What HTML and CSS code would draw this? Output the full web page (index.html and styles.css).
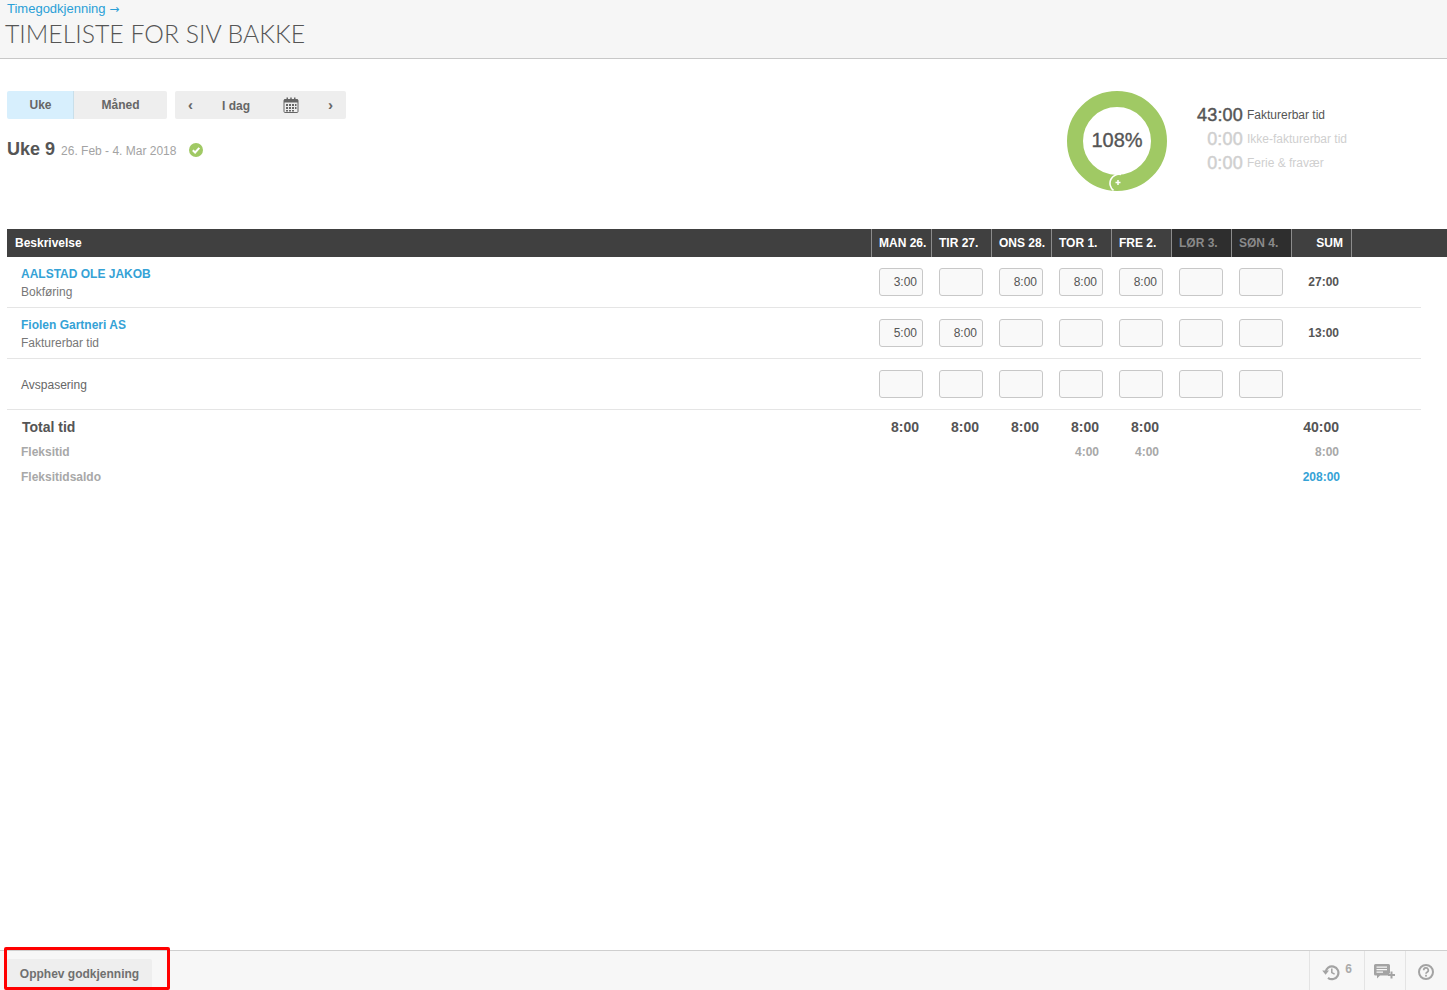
FILE: index.html
```html
<!DOCTYPE html>
<html lang="no">
<head>
<meta charset="utf-8">
<title>Timeliste</title>
<link rel="stylesheet" href="styles.css">
</head>
<body>
<div class="page">
  <header class="top">
    <a class="crumb">Timegodkjenning <span class="crumb-arrow">→</span></a>
    <h1 class="title">TIMELISTE FOR SIV BAKKE</h1>
  </header>
  <section class="summary">
    <div class="controls">
      <div class="toolbar">
        <div class="seg">
          <span class="seg-btn seg-on">Uke</span>
          <span class="seg-btn seg-off">Måned</span>
        </div>
        <div class="nav">
          <span class="nav-arrow">‹</span>
          <span class="nav-today">I dag</span>
          <svg class="cal" width="16" height="16" viewBox="0 0 16 16">
            <rect x="1" y="2.5" width="14" height="13" rx="1" fill="none" stroke="#666"/>
            <rect x="1" y="2.5" width="14" height="3" fill="#666"/>
            <rect x="3.5" y="0.5" width="1.5" height="3" fill="#666"/>
            <rect x="7.25" y="0.5" width="1.5" height="3" fill="#666"/>
            <rect x="11" y="0.5" width="1.5" height="3" fill="#666"/>
            <g fill="#666">
              <rect x="3" y="7" width="2" height="2"/><rect x="6" y="7" width="2" height="2"/><rect x="9" y="7" width="2" height="2"/><rect x="12" y="7" width="1.5" height="2"/>
              <rect x="3" y="10" width="2" height="2"/><rect x="6" y="10" width="2" height="2"/><rect x="9" y="10" width="2" height="2"/><rect x="12" y="10" width="1.5" height="2"/>
              <rect x="3" y="13" width="2" height="1.5"/><rect x="6" y="13" width="2" height="1.5"/><rect x="9" y="13" width="2" height="1.5"/>
            </g>
          </svg>
          <span class="nav-arrow nav-next">›</span>
        </div>
      </div>
      <div class="week">
        <span class="week-name">Uke 9</span>
        <span class="week-range">26. Feb - 4. Mar 2018</span>
        <svg class="week-ok" width="14" height="14" viewBox="0 0 14 14">
          <circle cx="7" cy="7" r="7" fill="#a0c964"/>
          <path d="M3.8 7.2 6.1 9.5 10.3 4.9" fill="none" stroke="#fff" stroke-width="2"/>
        </svg>
      </div>
    </div>
    <div class="donut">
      <svg width="100" height="100" viewBox="0 0 100 100">
        <circle cx="50" cy="50" r="42" fill="none" stroke="#a0c964" stroke-width="16"/>
        <path d="M54 83.500A9 9 0 0 0 46.500 99.400" fill="none" stroke="#fff" stroke-width="1.600"/>
        <path d="M48.500 91.500h5M51 89v5" stroke="#fff" stroke-width="1.500"/>
      </svg>
      <span class="donut-label">108%</span>
    </div>
    <dl class="totals">
      <div class="total-row"><dt class="total-val">43:00</dt><dd class="total-name">Fakturerbar tid</dd></div>
      <div class="total-row total-dim"><dt class="total-val">0:00</dt><dd class="total-name">Ikke-fakturerbar tid</dd></div>
      <div class="total-row total-dim"><dt class="total-val">0:00</dt><dd class="total-name">Ferie &amp; fravær</dd></div>
    </dl>
  </section>

  <section class="sheet">
    <div class="thead">
      <div class="th th-desc">Beskrivelse</div>
      <div class="th">MAN 26.</div>
      <div class="th">TIR 27.</div>
      <div class="th">ONS 28.</div>
      <div class="th">TOR 1.</div>
      <div class="th">FRE 2.</div>
      <div class="th th-off">LØR 3.</div>
      <div class="th th-off">SØN 4.</div>
      <div class="th th-sum">SUM</div>
      <div class="th"></div>
    </div>

    <div class="row">
      <div class="desc"><div class="client">AALSTAD OLE JAKOB</div><div class="task">Bokføring</div></div>
      <div class="cell"><span class="box">3:00</span></div>
      <div class="cell"><span class="box"></span></div>
      <div class="cell"><span class="box">8:00</span></div>
      <div class="cell"><span class="box">8:00</span></div>
      <div class="cell"><span class="box">8:00</span></div>
      <div class="cell"><span class="box"></span></div>
      <div class="cell"><span class="box"></span></div>
      <div class="rowsum">27:00</div>
    </div>
    <div class="row">
      <div class="desc"><div class="client">Fiolen Gartneri AS</div><div class="task">Fakturerbar tid</div></div>
      <div class="cell"><span class="box">5:00</span></div>
      <div class="cell"><span class="box">8:00</span></div>
      <div class="cell"><span class="box"></span></div>
      <div class="cell"><span class="box"></span></div>
      <div class="cell"><span class="box"></span></div>
      <div class="cell"><span class="box"></span></div>
      <div class="cell"><span class="box"></span></div>
      <div class="rowsum">13:00</div>
    </div>
    <div class="row">
      <div class="desc"><div class="task-only">Avspasering</div></div>
      <div class="cell"><span class="box"></span></div>
      <div class="cell"><span class="box"></span></div>
      <div class="cell"><span class="box"></span></div>
      <div class="cell"><span class="box"></span></div>
      <div class="cell"><span class="box"></span></div>
      <div class="cell"><span class="box"></span></div>
      <div class="cell"><span class="box"></span></div>
      <div class="rowsum"></div>
    </div>

    <div class="foot foot-total">
      <div class="foot-name">Total tid</div>
      <div class="num">8:00</div><div class="num">8:00</div><div class="num">8:00</div><div class="num">8:00</div><div class="num">8:00</div><div class="num"></div><div class="num"></div>
      <div class="num">40:00</div>
    </div>
    <div class="foot foot-flex">
      <div class="foot-name">Fleksitid</div>
      <div class="num"></div><div class="num"></div><div class="num"></div><div class="num">4:00</div><div class="num">4:00</div><div class="num"></div><div class="num"></div>
      <div class="num">8:00</div>
    </div>
    <div class="foot foot-flex">
      <div class="foot-name">Fleksitidsaldo</div>
      <div class="num"></div><div class="num"></div><div class="num"></div><div class="num"></div><div class="num"></div><div class="num"></div><div class="num"></div>
      <div class="num num-blue">208:00</div>
    </div>
  </section>

  <footer class="bottom">
    <span class="undo">Opphev godkjenning</span>
    <div class="tools">
      <div class="tool tool-history">
        <svg width="18" height="18" viewBox="0 0 18 18">
          <path d="M3.600 9.500A6.400 6.400 0 1 1 6 14.800" fill="none" stroke="#a3a3a3" stroke-width="2.200"/>
          <path d="M0.200 7.500H7L3.600 11.800Z" fill="#a3a3a3"/>
          <path d="M9.800 5.500V9.600L12.600 11.200" fill="none" stroke="#a3a3a3" stroke-width="1.500"/>
        </svg>
        <span class="tool-count">6</span>
      </div>
      <div class="tool tool-comment">
        <svg width="22" height="16" viewBox="0 0 22 16">
          <path d="M1.500 0H14.500A1.500 1.500 0 0 1 16 1.500V10A1.500 1.500 0 0 1 14.500 11.500H6L3 14.500V11.500H1.500A1.500 1.500 0 0 1 0 10V1.500A1.500 1.500 0 0 1 1.500 0Z" fill="#a3a3a3"/>
          <path d="M2.500 3.200H13M2.500 5.700H13M2.500 8.200H9" stroke="#f7f7f7" stroke-width="1.200"/>
          <path d="M15 9.500H21.500V12.500H15Z" fill="#f7f7f7"/>
          <path d="M17.500 7.500V14.500M14 11H21" stroke="#a3a3a3" stroke-width="2"/>
        </svg>
      </div>
      <div class="tool tool-help">
        <svg width="16" height="16" viewBox="0 0 16 16">
          <circle cx="8" cy="8" r="7" fill="none" stroke="#a3a3a3" stroke-width="2"/>
          <path d="M5.700 6.200A2.300 2.300 0 1 1 9 8.200C8.300 8.600 8 9 8 9.800" fill="none" stroke="#a3a3a3" stroke-width="1.700"/>
          <rect x="7.100" y="10.800" width="1.800" height="1.800" fill="#a3a3a3"/>
        </svg>
      </div>
    </div>
  </footer>
  <div class="mark"></div>
</div>
</body>
</html>
```
FILE: styles.css
```css
* { box-sizing: border-box; }
html, body { margin: 0; padding: 0; }
body { font-family: "Liberation Sans", Arial, sans-serif; color: #555; background: #fff; }
.page { position: relative; width: 1447px; height: 990px; overflow: hidden; display: flex; flex-direction: column; }

.top { height: 59px; background: #f6f6f6; border-bottom: 1px solid #c8c8c8; padding: 0 0 0 5px; flex: none; }
.crumb { display: block; height: 18px; padding-left: 2px; font-size: 13px; line-height: 18px; color: #2a9fd6; }
.crumb-arrow { font-family: "DejaVu Sans", sans-serif; font-size: 12px; }
.title { margin: 0; font-family: Lato, sans-serif; font-weight: 300; font-size: 24.8px; line-height: 32px; color: #555; white-space: nowrap; }

.summary { height: 170px; flex: none; display: flex; padding: 32px 0 0 7px; }
.controls { width: 1060px; flex: none; }
.toolbar { display: flex; gap: 8px; height: 28px; }
.seg { display: flex; width: 160px; border-radius: 2px; overflow: hidden; font-size: 12px; font-weight: 700; color: #666; }
.seg-btn { display: flex; align-items: center; justify-content: center; }
.seg-on { width: 67px; padding-left: 1px; background: #d7effd; border-right: 1px solid #c9dfea; }
.seg-off { flex: 1; background: #eeeeee; }
.nav { display: flex; align-items: center; width: 171px; background: #eeeeee; border-radius: 2px; font-size: 12px; font-weight: 700; color: #666; }
.nav-arrow { width: 31px; text-align: center; font-size: 15px; line-height: 28px; }
.nav-today { width: 46px; padding-top: 1px; text-align: center; margin-left: 7px; }
.cal { margin-left: 24px; }
.nav-next { margin-left: 16px; }
.week { display: flex; align-items: center; height: 20px; margin-top: 20px; }
.week-name { font-size: 18px; font-weight: 700; color: #555; }
.week-range { font-size: 12px; color: #a3a3a3; margin-left: 6px; padding-top: 3px; }
.week-ok { margin-left: 13px; margin-top: 1px; }

.donut { position: relative; width: 100px; height: 100px; flex: none; }
.donut svg { display: block; }
.donut-label { position: absolute; inset: 0 0 2px 0; display: flex; align-items: center; justify-content: center; font-size: 20px; -webkit-text-stroke: 0.35px currentColor; color: #555; }
.totals { margin: 12px 0 0 30px; padding: 0; width: 170px; }
.total-row { display: flex; align-items: center; height: 24px; margin: 0; }
.total-val { width: 46px; text-align: right; font-size: 18px; letter-spacing: 0.2px; font-weight: 400; -webkit-text-stroke: 0.45px currentColor; color: #555; }
.total-name { margin: 0 0 0 4px; font-size: 12px; color: #555; white-space: nowrap; }
.total-dim .total-val, .total-dim .total-name { color: #cfcfcf; }

.sheet { flex: 1; padding-left: 7px; }
.thead { display: grid; grid-template-columns: 864px repeat(8, 60px) 1fr; height: 28px; background: #404040; color: #fff; font-size: 12px; font-weight: 700; }
.th { display: flex; align-items: center; padding-left: 7px; border-left: 1px solid #8c8c8c; white-space: nowrap; }
.th-desc { padding-left: 8px; border-left: 0; }
.th-off { background: #2e2e2e; color: #8a8a8a; }
.th-sum { justify-content: flex-end; padding: 0 8px 0 0; }

.row { display: grid; grid-template-columns: 864px repeat(8, 60px); width: 1414px; height: 51px; border-bottom: 1px solid #e5e5e5; align-items: center; }
.row .desc { padding-left: 14px; padding-top: 1px; }
.client { font-size: 12px; line-height: 18px; font-weight: 700; color: #35a2d6; }
.task { font-size: 12px; line-height: 18px; color: #777; }
.task-only { font-size: 12px; color: #666; }
.cell { padding-left: 8px; }
.box { display: block; width: 44px; height: 28px; padding-right: 5px; background: #f9f9f9; border: 1px solid #c8c8c8; border-radius: 3px; text-align: right; font-size: 12px; line-height: 26px; color: #555; }
.rowsum { text-align: right; padding-right: 12px; font-size: 12px; font-weight: 700; color: #555; width: 60px; }
.rowsum:empty { height: 1px; }

.foot { display: grid; grid-template-columns: 864px repeat(8, 60px); width: 1414px; height: 25px; align-items: center; }
.foot-total { margin-top: 4px; font-size: 14px; font-weight: 700; color: #555; }
.foot-total .foot-name { padding-left: 15px; }
.foot-flex { font-size: 12px; font-weight: 700; color: #a8a8a8; }
.foot-flex .foot-name { padding-left: 14px; }
.num { text-align: right; padding-right: 12px; }
.num-blue { color: #35a2d6; padding-right: 11px; }

.bottom { height: 40px; flex: none; display: flex; justify-content: space-between; background: #f7f7f7; border-top: 1px solid #cfcfcf; padding-left: 7px; }
.undo { align-self: flex-end; display: flex; align-items: center; justify-content: center; width: 145px; height: 31px; padding-bottom: 2px; background: #eeeeee; border-radius: 2px; font-size: 12px; font-weight: 700; color: #707070; }
.tools { display: flex; }
.tool { display: flex; align-items: center; justify-content: center; border-left: 1px solid #e4e4e4; }
.tool-history { width: 55px; padding-top: 3px; gap: 5px; }
.tool-comment { width: 41px; padding-top: 3px; }
.tool-help { width: 42px; padding: 3px 2px 0 0; }
.tool-count { font-size: 12px; font-weight: 700; color: #aaa; margin-top: -6px; }

.mark { position: absolute; left: 4px; top: 947px; width: 166px; height: 43px; border: 3px solid #f00; border-radius: 2px; pointer-events: none; }
```
